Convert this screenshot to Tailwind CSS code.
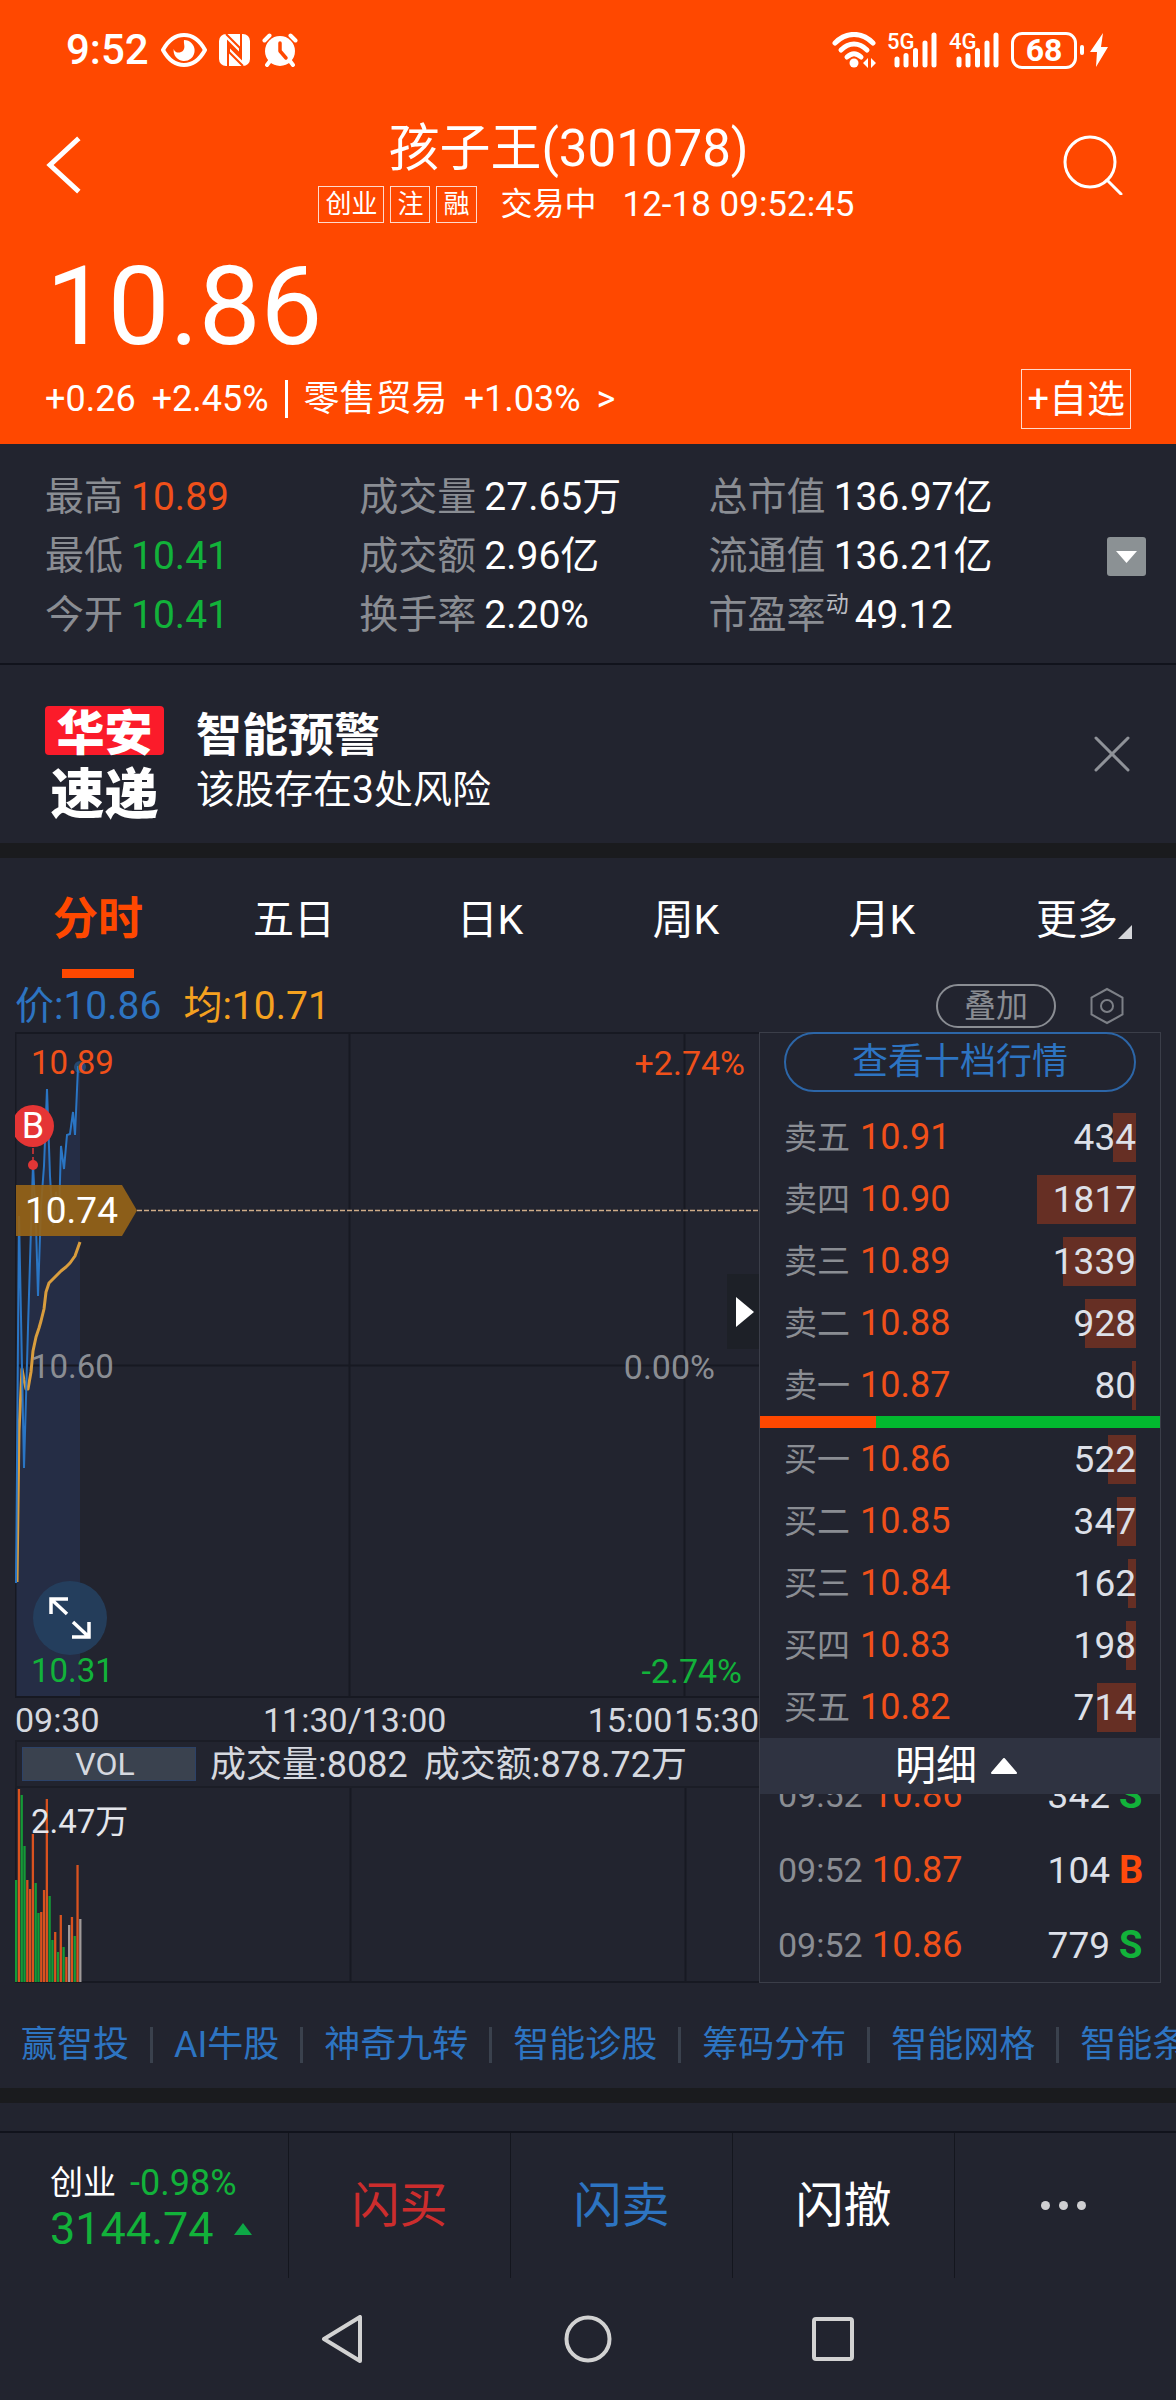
<!DOCTYPE html>
<html lang="zh-CN">

<head>
  <meta charset="UTF-8">
  <meta name="viewport" content="width=device-width, initial-scale=1">
  <title>孩子王(301078)</title>
  <script src="https://cdn.jsdelivr.net/npm/@tailwindcss/browser@4"></script>
</head>

<body class="min-h-screen overflow-x-hidden bg-[#22242f] font-[Roboto,'Noto_Sans_CJK_SC',sans-serif] text-white">

  <header class="bg-[#ff4800]">
    <!-- Barre d'état -->
    <div class="flex h-[100px] items-center justify-between pl-[66px] pr-[68px]">
      <div class="flex items-center">
        <span class="text-[42px] font-medium leading-[50px]">9:52</span>
        <svg class="ml-3 h-[34px] w-[46px]" viewBox="0 0 46 34" fill="none">
          <path d="M2 17C8 6 15 2 23 2s15 4 21 15c-6 11-13 15-21 15S8 28 2 17z" stroke="#fff" stroke-width="4" stroke-linejoin="round" />
          <path d="M23 7a10.500 10.500 0 1 1-10.300 9c1 3 3.500 4 6 3.500 4-1 5-4 4.600-7-.2-2-.6-3.500-.3-5.500z" fill="#fff" />
        </svg>
        <svg class="ml-3 h-[34px] w-[31px]" viewBox="0 0 31 34">
          <path d="M7 1h17a7 7 0 0 1 7 7v18a7 7 0 0 1-7 7H7a7 7 0 0 1-7-7V8a7 7 0 0 1 7-7z" fill="#fff" />
          <path d="M9 33V9l12 12v-6L7 1M22 1v24L10 13v6l14 14" fill="none" stroke="#ff4800" stroke-width="2" />
        </svg>
        <svg class="ml-3 h-[36px] w-[36px]" viewBox="0 0 36 36">
          <g fill="none" stroke="#fff" stroke-width="4" stroke-linecap="round">
            <path d="M2.500 8.500l5-5M33.500 8.500l-5-5M8 29l-3 4M28 29l3 4" />
          </g>
          <circle cx="18" cy="19" r="15" fill="#fff" />
          <path d="M18 11v8l6 7" fill="none" stroke="#ff4800" stroke-width="3.500" stroke-linecap="round" stroke-linejoin="round" />
        </svg>
      </div>
      <div class="flex items-center">
        <svg class="h-9 w-[46px]" viewBox="0 0 46 36" fill="none">
          <g stroke="#fff" stroke-width="5" stroke-linecap="round">
            <path d="M3 11C14-.5 30-.5 41 11" />
            <path d="M9 18c8-8 18-8 26 0" />
            <path d="M15 25c5-4.500 9-4.500 14 0" />
          </g>
          <circle cx="22" cy="31" r="4.500" fill="#fff" />
          <path d="M36 26v10l-5-5zM39 26v10l5-5z" fill="#fff" />
        </svg>
        <div class="relative ml-[9px] h-9 w-[50px]">
          <span class="absolute left-0 top-0 text-[22px] font-medium leading-5">5G</span>
          <svg class="h-full w-full" viewBox="0 0 50 36" stroke="#fff" stroke-width="5" stroke-linecap="round">
            <path d="M10 27v6M19 23.500v9.500M28.500 18.500V33M38 11v22M47 3v30" />
          </svg>
        </div>
        <div class="relative ml-3 h-9 w-[50px]">
          <span class="absolute left-0 top-0 text-[22px] font-medium leading-5">4G</span>
          <svg class="h-full w-full" viewBox="0 0 50 36" stroke="#fff" stroke-width="5" stroke-linecap="round">
            <path d="M10 27v6M19 23.500v9.500M28.500 18.500V33M38 11v22M47 3v30" />
          </svg>
        </div>
        <span class="ml-3 flex h-[37px] w-[66px] items-center justify-center rounded-[11px] border-3 border-white text-[32px] font-bold leading-none">68</span>
        <span class="ml-[3px] h-[10px] w-1 rounded bg-white"></span>
        <svg class="ml-[6px] h-[34px] w-[18px]" viewBox="0 0 18 34"><path d="M13 0L0 19h7L6 34l12-20h-7z" fill="#fff" /></svg>
      </div>
    </div>

    <!-- Titre -->
    <div class="flex h-[130px] items-center justify-between pl-[46px] pr-[53px]">
      <button type="button" aria-label="返回" class="w-[60px]">
        <svg class="h-[58px] w-9" viewBox="0 0 36 58" fill="none" stroke="#fff" stroke-width="5"><path d="M31 4L4 29l27 25" stroke-linecap="square" /></svg>
      </button>
      <div class="flex flex-col items-center justify-end self-stretch pb-px">
        <h1 class="pr-8 text-[51px] leading-[60px]">孩子王(301078)</h1>
        <div class="flex h-[50px] items-center pl-1 text-[26px] leading-[35px]">
          <span class="border border-white/80 px-[6px]">创业</span>
          <span class="ml-[6px] border border-white/80 px-[6px]">注</span>
          <span class="ml-[6px] border border-white/80 px-[6px]">融</span>
          <span class="ml-6 text-[32px]">交易中</span>
          <span class="ml-[26px] text-[35px]">12-18 09:52:45</span>
        </div>
      </div>
      <button type="button" aria-label="搜索" class="w-[60px]">
        <svg class="h-[60px] w-[60px]" viewBox="0 0 60 60" fill="none" stroke="#fff" stroke-width="3"><circle cx="27" cy="27" r="25" /><path d="M44 45l14 14" stroke-linecap="round" /></svg>
      </button>
    </div>

    <p class="mt-[18px] pl-[46px] pt-[2px] text-[110px] leading-[114px]">10.86</p>
    <div class="mt-[5px] flex h-[75px] items-center justify-between pb-[15px] pl-[45px] pr-[45px]">
      <a href="#" class="flex items-center whitespace-pre text-[36px] leading-[50px]">
        <span>+0.26</span><span class="ml-4">+2.45%</span>
        <span class="mx-4 h-[38px] w-[3px] bg-white"></span>
        <span>零售贸易</span><span class="ml-4">+1.03%</span><span class="ml-4">&gt;</span>
      </a>
      <button type="button" class="h-[60px] whitespace-nowrap border border-white/80 px-[5px] text-[38px] leading-[58px]">+自选</button>
    </div>
  </header>

  <!-- Chiffres clés -->
  <section class="flex items-center border-b-2 border-[#11131c] pb-[18px] pl-[45px] pr-[30px] pt-6">
    <dl class="grid flex-1 grid-cols-[314fr_349fr_398fr] text-[39px] leading-[59px]">
      <div class="flex gap-2"><dt class="text-[#8a8d93]">最高</dt><dd class="text-[#f0501a]">10.89</dd></div>
      <div class="flex gap-2"><dt class="text-[#8a8d93]">成交量</dt><dd>27.65万</dd></div>
      <div class="flex gap-2"><dt class="text-[#8a8d93]">总市值</dt><dd>136.97亿</dd></div>
      <div class="flex gap-2"><dt class="text-[#8a8d93]">最低</dt><dd class="text-[#12b23a]">10.41</dd></div>
      <div class="flex gap-2"><dt class="text-[#8a8d93]">成交额</dt><dd>2.96亿</dd></div>
      <div class="flex gap-2"><dt class="text-[#8a8d93]">流通值</dt><dd>136.21亿</dd></div>
      <div class="flex gap-2"><dt class="text-[#8a8d93]">今开</dt><dd class="text-[#12b23a]">10.41</dd></div>
      <div class="flex gap-2"><dt class="text-[#8a8d93]">换手率</dt><dd>2.20%</dd></div>
      <div class="flex gap-[6px]"><dt class="flex text-[#8a8d93]">市盈率<span class="text-[23px] leading-[38px] text-[#b9bbc1]">动</span></dt><dd>49.12</dd></div>
    </dl>
    <button type="button" aria-label="展开" class="flex h-[39px] w-[39px] items-center justify-center rounded-[3px] bg-[#8b9194]">
      <svg class="h-3 w-[21px]" viewBox="0 0 21 12"><path d="M0 0h21L10.500 12z" fill="#fff" /></svg>
    </button>
  </section>

  <!-- Alerte -->
  <section class="flex h-[178px] items-center pl-[45px] pr-[46px]">
    <div class="flex w-[119px] flex-col items-center pt-[14px] font-['Noto_Sans_CJK_SC'] font-black">
      <span class="h-[49px] w-full rounded-[4px] bg-[#fb1b2a] text-center text-[48px] leading-[47px]">华安</span>
      <span class="mt-[10px] text-[54px] leading-[52px]">速递</span>
    </div>
    <div class="ml-8 flex-1 pt-4">
      <h2 class="text-[46px] font-bold leading-[56px]">智能预警</h2>
      <p class="text-[39px] leading-[54px]">该股存在3处风险</p>
    </div>
    <button type="button" aria-label="关闭">
      <svg class="h-9 w-9" viewBox="0 0 36 36" stroke="#8f9298" stroke-width="3" stroke-linecap="round"><path d="M2 2l32 32M34 2L2 34" /></svg>
    </button>
  </section>

  <div class="h-[15px] bg-[#1a1b1e]"></div>

  <!-- Onglets -->
  <nav class="grid h-[120px] grid-cols-6 text-[41px] leading-[116px]">
    <button type="button" class="relative pt-1 text-[45px] font-bold text-[#ff4800]">分时
      <span class="absolute bottom-0 left-1/2 h-[9px] w-[72px] -translate-x-1/2 bg-[#ff4800]"></span>
    </button>
    <button type="button" class="pt-1">五日</button>
    <button type="button" class="pt-1">日K</button>
    <button type="button" class="pt-1">周K</button>
    <button type="button" class="pt-1">月K</button>
    <button type="button" class="flex items-center justify-center pl-3 pt-1">更多
      <svg class="mt-6 h-[14px] w-[14px]" viewBox="0 0 14 14"><path d="M14 0v14H0z" fill="#d5d6da" /></svg>
    </button>
  </nav>

  <div class="flex h-[54px] items-center pl-[15px] pr-[52px] pt-[2px] text-[39px] leading-[52px]">
    <span class="text-[#2d74c2]">价:10.86</span>
    <span class="ml-[22px] text-[#f5a11f]">均:10.71</span>
    <button type="button" class="ml-auto flex h-[44px] w-[120px] items-center justify-center rounded-full border-2 border-[#8a8d93] text-[32px] leading-10 text-[#8a8d93]">叠加</button>
    <button type="button" aria-label="设置" class="ml-[34px]">
      <svg class="h-[38px] w-[34px]" viewBox="0 0 34 38" fill="none" stroke="#7d8087" stroke-width="2"><path d="M17 2l15.500 8.500v17L17 36 1.500 27.500v-17z" /><circle cx="17" cy="19" r="6" /></svg>
    </button>
  </div>

  <main class="flex px-[15px]">
    <!-- Graphique du jour -->
    <div class="min-w-0 flex-1">
      <div class="relative h-[666px] text-[33px] leading-9">
        <svg class="absolute inset-0 h-full w-full" viewBox="0 0 744 666" preserveAspectRatio="none" fill="none">
          <path d="M1 666V551L4 184l5 252 4-150 3-90 2-64 3 60 2 75 3-90 3-40 3-79 3 87 3 50 3-34 3 23 2-69 3 23 3-34 2-1 3-22 3 23 3-68 2-1V666z" fill="#252d45" />
          <path d="M0 1h744M0 665h744M0 333.500h744M334.500 0v666M669.500 0v666M0.500 0v666" stroke="#171922" stroke-width="2" />
          <path d="M2 550L4 399l3-62 2 11 2 9h2l3-17 2-21 3-14 3-9 2-7 3-12 2-17 3-9 3-3 3-3 3-3 3-3 5-4 4-4 5-7 5-14" stroke="#d99d3d" stroke-width="3" stroke-linejoin="round" />
          <path d="M1 551L4 184l5 252 4-140 3-100 2-64 3 60 2 72 3-90 3-40 3-77 3 87 3 50 3-34 3 23 2-69 3 23 3-34 3-1 3-22 2 23 3-68 3-1" stroke="#2a75c4" stroke-width="2" />
          <circle cx="65" cy="35" r="6" fill="#2a75c4" fill-opacity=".45" />
          <path d="M122 178.500h622" stroke="#cfac88" stroke-width="1.500" stroke-dasharray="5 2" />
          <path d="M1 153h106l15 25.500L107 204H1z" fill="#966418" fill-opacity=".92" />
          <path d="M18 116v14" stroke="#e03636" stroke-width="1.500" stroke-dasharray="6 3" />
          <circle cx="18" cy="133" r="5" fill="#e03636" />
        </svg>
        <div class="absolute left-0 top-[73px] h-[42px] w-[39px] overflow-hidden">
          <span class="absolute right-0 flex h-[42px] w-[42px] items-center justify-center rounded-full bg-[#e53535] text-[36px] leading-none">B</span>
        </div>
        <span class="absolute left-[10px] top-[161px] text-[37px]">10.74</span>
        <span class="absolute left-4 top-[13px] text-[#f0501a]">10.89</span>
        <span class="absolute right-[14px] top-[13px] text-[34px] text-[#f0501a]">+2.74%</span>
        <span class="absolute left-4 top-[317px] text-[#8a8d93]">10.60</span>
        <span class="absolute right-[44px] top-[317px] text-[34px] text-[#8a8d93]">0.00%</span>
        <span class="absolute left-4 top-[621px] text-[#12b23a]">10.31</span>
        <span class="absolute right-[17px] top-[621px] text-[34px] text-[#12b23a]">-2.74%</span>
        <button type="button" aria-label="收起盘口" class="absolute right-0 top-[242px] flex h-[75px] w-8 items-center justify-center bg-[#1d2027] pl-1">
          <svg class="h-[30px] w-[18px]" viewBox="0 0 18 30"><path d="M0 0v30l18-15z" fill="#fff" /></svg>
        </button>
        <button type="button" aria-label="全屏" class="absolute left-[18px] top-[549px] flex h-[74px] w-[74px] items-center justify-center rounded-full bg-[#25405f]/90">
          <svg class="h-[44px] w-[44px]" viewBox="0 0 44 44" fill="none" stroke="#fff" stroke-width="3.500"><path d="M3 18V3h17M3 3l16 15M41 26v15H24M41 41L25 26" /></svg>
        </button>
      </div>
      <div class="flex h-[42px] items-center pt-[2px] text-[34px] leading-10 text-[#d5d8df]">
        <span class="basis-1/3">09:30</span>
        <span>11:30/13:00</span>
        <span class="ml-auto">15:00</span>
        <span class="ml-[2px]">15:30</span>
      </div>
      <div class="flex h-12 items-center whitespace-nowrap border-y-2 border-l-2 border-[#1b1d26] pl-[5px] text-[36px] leading-[44px] text-[#d5d8df]">
        <button type="button" class="h-[34px] w-[174px] border border-[#2c4268] bg-[#3a424f] pr-2 text-[32px] leading-8">VOL</button>
        <span class="ml-[14px] pt-[2px]">成交量:8082</span>
        <span class="ml-4 pt-[2px]">成交额:878.72万</span>
      </div>
      <div class="relative h-[195px]">
        <svg class="h-full w-full" viewBox="0 0 744 195" preserveAspectRatio="none">
          <path d="M0 194h744M0.500 0v195M335.500 0v195M670.500 0v195" stroke="#171922" stroke-width="2" />
          <g id="volume-bars"></g>
        </svg>
        <span class="absolute left-4 top-[14px] text-[33px] leading-10 text-[#e4e6ec]">2.47万</span>
      </div>
    </div>

    <!-- Carnet d'ordres -->
    <aside class="flex w-[402px] flex-col border border-[#3b3e49]">
      <button type="button" class="-mt-px mx-6 h-[60px] rounded-full border-2 border-[#2c66a8] text-[36px] leading-[56px] text-[#2d74c2]">查看十档行情</button>
      <table class="mt-[14px] w-full">
        <tbody id="asks"></tbody>
      </table>
      <div class="flex h-3 bg-[#02b92f]"><span class="w-[29%] bg-[#ff4800]"></span></div>
      <table class="w-full">
        <tbody id="bids"></tbody>
      </table>
      <button type="button" class="flex h-[56px] items-center justify-center gap-[14px] bg-[#2f3341] pr-2 text-[41px] leading-[56px]">明细
        <svg class="h-4 w-[26px]" viewBox="0 0 26 16"><path d="M13 1L25 15H1z" fill="#fff" stroke="#fff" stroke-width="2" stroke-linejoin="round" /></svg>
      </button>
      <div class="flex h-[188px] items-end overflow-hidden">
        <table class="w-full">
          <tbody id="ticks"></tbody>
        </table>
      </div>
    </aside>
  </main>

  <!-- Outils -->
  <nav class="flex h-[105px] items-center gap-[21px] overflow-hidden whitespace-nowrap pl-[21px] pt-[18px] text-[36px] leading-[54px] text-[#2d74c2]">
    <a href="#">赢智投</a><span class="h-9 w-[3px] shrink-0 bg-[#3a414d]"></span>
    <a href="#">AI牛股</a><span class="h-9 w-[3px] shrink-0 bg-[#3a414d]"></span>
    <a href="#">神奇九转</a><span class="h-9 w-[3px] shrink-0 bg-[#3a414d]"></span>
    <a href="#">智能诊股</a><span class="h-9 w-[3px] shrink-0 bg-[#3a414d]"></span>
    <a href="#">筹码分布</a><span class="h-9 w-[3px] shrink-0 bg-[#3a414d]"></span>
    <a href="#">智能网格</a><span class="h-9 w-[3px] shrink-0 bg-[#3a414d]"></span>
    <a href="#">智能条件</a>
  </nav>
  <div class="mb-7 h-[15px] bg-[#1a1b1e]"></div>

  <!-- Barre d'actions -->
  <footer>
    <div class="grid h-[147px] grid-cols-[289fr_222fr_222fr_222fr_221fr] divide-x divide-[#14161e] border-t-2 border-[#11131c] text-[48px]">
      <div class="flex flex-col justify-center pl-[50px] pt-[2px]">
        <p class="flex items-center gap-[14px] text-[33px] leading-[44px]">创业 <span class="text-[36px] text-[#12b23a]">-0.98%</span></p>
        <p class="flex items-center text-[45px] leading-[48px] text-[#12b23a]">3144.74
          <svg class="ml-5 h-3 w-[18px]" viewBox="0 0 18 12"><path d="M9 0l9 12H0z" fill="#0ea846" /></svg>
        </p>
      </div>
      <button type="button" class="text-[#cc2d2d]">闪买</button>
      <button type="button" class="text-[#2d74c2]">闪卖</button>
      <button type="button">闪撤</button>
      <button type="button" aria-label="更多" class="flex items-center justify-center gap-[9px] pr-1">
        <span class="h-[9px] w-[9px] rounded-full bg-[#cfcfd2]"></span>
        <span class="h-[9px] w-[9px] rounded-full bg-[#cfcfd2]"></span>
        <span class="h-[9px] w-[9px] rounded-full bg-[#cfcfd2]"></span>
      </button>
    </div>
    <div class="flex h-[122px] items-center justify-center gap-[200px]">
      <button type="button" aria-label="后退">
        <svg class="h-12 w-[44px]" viewBox="0 0 44 48" fill="none" stroke="#d2d2d2" stroke-width="4" stroke-linejoin="round"><path d="M40 2v44L4 24z" /></svg>
      </button>
      <button type="button" aria-label="主页">
        <svg class="h-12 w-12" viewBox="0 0 48 48" fill="none" stroke="#d2d2d2" stroke-width="4"><circle cx="24" cy="24" r="21.500" /></svg>
      </button>
      <button type="button" aria-label="任务">
        <svg class="h-12 w-[44px]" viewBox="0 0 44 48" fill="none" stroke="#d2d2d2" stroke-width="4"><rect x="2" y="4" width="38" height="40" rx="2" /></svg>
      </button>
    </div>
  </footer>

  <script>
    // [libellé, prix, volume, largeur de la barre]
    const asks = [
      ["卖五", "10.91", 434, 23],
      ["卖四", "10.90", 1817, 99],
      ["卖三", "10.89", 1339, 73],
      ["卖二", "10.88", 928, 51],
      ["卖一", "10.87", 80, 4]
    ];
    const bids = [
      ["买一", "10.86", 522, 28],
      ["买二", "10.85", 347, 19],
      ["买三", "10.84", 162, 8],
      ["买四", "10.83", 198, 10],
      ["买五", "10.82", 714, 39]
    ];
    const ticks = [
      ["09:52", "10.86", 342, "S"],
      ["09:52", "10.87", 104, "B"],
      ["09:52", "10.86", 779, "S"]
    ];
    // hauteur et couleur par minute
    const volumes = [
      [102, "g"], [193, "r"], [187, "g"], [136, "g"], [102, "r"], [93, "r"], [148, "r"], [99, "g"],
      [69, "g"], [70, "r"], [92, "r"], [183, "r"], [86, "g"], [42, "g"], [50, "r"], [30, "g"],
      [67, "r"], [35, "g"], [25, "r"], [57, "n"], [65, "r"], [46, "g"], [117, "r"], [63, "n"]
    ];
    const barColors = { r: "#d9521f", g: "#149a37", n: "#a09a9a" };

    function renderOrders(id, rows) {
      document.getElementById(id).innerHTML = rows.map(([label, price, volume, width]) => `
        <tr class="h-[62px] leading-[49px]">
          <th scope="row" class="w-[100px] pl-6 text-left text-[33px] font-normal text-[#8a8d93]">${label}</th>
          <td class="text-[36px] text-[#f0501a]">${price}</td>
          <td class="pr-6 text-right text-[37px] text-[#dde0e8]">
            <div class="relative">
              <span class="absolute right-0 top-0 h-[49px] bg-[#662f24]" style="width:${width}px"></span>
              <span class="relative">${volume}</span>
            </div>
          </td>
        </tr>`).join("");
    }

    renderOrders("asks", asks);
    renderOrders("bids", bids);

    document.getElementById("ticks").innerHTML = ticks.map(([time, price, volume, side]) => `
      <tr class="h-[75px] text-[36px] leading-[49px]">
        <td class="w-[112px] pl-[18px] pt-[2px] text-[34px] text-[#8a8d93]">${time}</td>
        <td class="pt-[2px] text-[#f0501a]">${price}</td>
        <td class="pt-[2px] text-right text-[37px] text-[#dde0e8]">${volume}</td>
        <td class="w-[50px] pl-[9px] pt-[2px] text-[38px] font-bold ${side === "B" ? "text-[#ff4a0c]" : "text-[#12b23a]"}">${side}</td>
      </tr>`).join("");

    document.getElementById("volume-bars").innerHTML = volumes.map(([height, color], i) =>
      `<rect x="${i * 2.79}" y="${194 - height}" width="2.3" height="${height}" fill="${barColors[color]}" />`
    ).join("");
  </script>
</body>

</html>
